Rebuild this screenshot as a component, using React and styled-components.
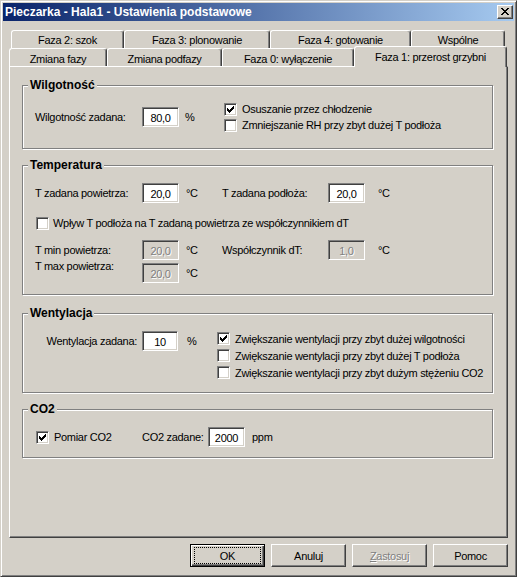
import React from 'react';
import styled, { createGlobalStyle } from 'styled-components';

const GlobalStyle = createGlobalStyle`
  html, body {
    margin: 0;
    padding: 0;
    background: #d4d0c8;
  }
  body {
    font-family: "Liberation Sans", Arial, sans-serif;
    font-size: 11px;
    letter-spacing: -0.3px;
    color: #000;
  }
  * { box-sizing: border-box; }
`;

const Window = styled.div`
  width: 517px;
  height: 577px;
  display: flex;
  flex-direction: column;
  background: #d4d0c8;
  border: 1px solid;
  border-color: #d4d0c8 #404040 #404040 #d4d0c8;
  box-shadow: inset 1px 1px 0 #fff, inset -1px -1px 0 #808080;
  padding: 2px;
`;

const TitleBar = styled.div`
  height: 18px;
  display: flex;
  align-items: center;
  justify-content: space-between;
  padding: 0 1px 0 2px;
  background: linear-gradient(to right, #0a246a, #a6caf0);
`;

const Title = styled.span`
  color: #fff;
  font-weight: bold;
  font-size: 12px;
  letter-spacing: 0;
  white-space: nowrap;
`;

const CloseButton = styled.div`
  width: 16px;
  height: 14px;
  display: flex;
  align-items: center;
  justify-content: center;
  background: #d4d0c8;
  border: 1px solid;
  border-color: #fff #404040 #404040 #fff;
  box-shadow: inset -1px -1px 0 #808080;
  padding: 0 1px 1px 0;
`;

const Body = styled.div`
  flex: 1;
  display: flex;
  flex-direction: column;
  padding: 9px 6px 7px 6px;
`;

const TabStrip = styled.div`
  height: 36px;
  display: flex;
  flex-direction: column;
`;

const TabRow = styled.div`
  height: 18px;
  display: flex;
  padding-left: ${(p) => p.$indent || 0}px;
`;

const Tab = styled.div`
  width: ${(p) => p.$w}px;
  height: ${(p) => (p.$active ? 21 : 18)}px;
  margin-top: ${(p) => (p.$active ? -2 : 0)}px;
  position: ${(p) => (p.$active ? 'relative' : 'static')};
  z-index: ${(p) => (p.$active ? 1 : 'auto')};
  flex-shrink: 0;
  background: #d4d0c8;
  border-top: 1px solid #fff;
  border-left: 1px solid #fff;
  border-right: 1px solid #404040;
  box-shadow: inset -1px 0 0 #808080;
  border-radius: 3px 3px 0 0;
  text-align: center;
  padding-top: ${(p) => (p.$back ? 3 : 4)}px;
  line-height: 13px;
  white-space: nowrap;
`;

const Panel = styled.div`
  flex: 1;
  display: flex;
  flex-direction: column;
  border: 1px solid;
  border-color: #fff #404040 #404040 #fff;
  box-shadow: inset -1px -1px 0 #808080;
  padding: 12px 14px 0 12px;
`;

const Group = styled.fieldset`
  margin: ${(p) => p.$mt || 0}px 0 0 0;
  padding: 0;
  min-width: 0;
  height: ${(p) => p.$h}px;
  border: 1px solid #808080;
  box-shadow: inset 1px 1px 0 #fff, 1px 1px 0 #fff;
`;

const Legend = styled.legend`
  margin-left: 5px;
  padding: 0 2px;
  font-weight: bold;
  font-size: 12px;
  letter-spacing: 0;
  line-height: 13px;
  background: #d4d0c8;
`;

const GroupBody = styled.div`
  padding: ${(p) => p.$pt}px 0 0 12px;
`;

const Row = styled.div`
  display: flex;
  align-items: ${(p) => p.$align || 'center'};
  margin-top: ${(p) => p.$mt || 0}px;
  height: ${(p) => (p.$h ? `${p.$h}px` : 'auto')};
`;

const Label = styled.span`
  width: ${(p) => p.$w}px;
  flex-shrink: 0;
  text-align: ${(p) => (p.$right ? 'right' : 'left')};
  padding-right: ${(p) => (p.$right ? 5 : 0)}px;
  align-self: ${(p) => (p.$raised ? 'flex-start' : 'auto')};
  margin-top: ${(p) => (p.$raised ? -3 : 0)}px;
  line-height: 13px;
  white-space: nowrap;
`;

const Unit = styled.span`
  width: ${(p) => (p.$w ? `${p.$w}px` : 'auto')};
  flex-shrink: 0;
  padding-left: ${(p) => p.$pl || 0}px;
  line-height: 13px;
  white-space: nowrap;
`;

const Field = styled.div`
  width: ${(p) => p.$w || 37}px;
  height: 20px;
  flex-shrink: 0;
  display: flex;
  align-items: center;
  justify-content: center;
  background: ${(p) => (p.$disabled ? '#d4d0c8' : '#fff')};
  color: ${(p) => (p.$disabled ? '#808080' : '#000')};
  text-shadow: ${(p) => (p.$disabled ? '1px 1px 0 #fff' : 'none')};
  border: 1px solid;
  border-color: #808080 #fff #fff #808080;
  box-shadow: inset 1px 1px 0 #404040, inset -1px -1px 0 #d4d0c8;
  padding-top: 1px;
`;

const CheckColumn = styled.div`
  display: flex;
  flex-direction: column;
`;

const CheckRow = styled.label`
  display: flex;
  align-items: center;
  height: ${(p) => p.$h || 16}px;
  gap: ${(p) => p.$gap || 5}px;
  margin-left: ${(p) => p.$ml || 0}px;
  width: ${(p) => (p.$w ? `${p.$w}px` : 'auto')};
  flex-shrink: 0;
  white-space: nowrap;
`;

const Box = styled.span`
  width: 13px;
  height: 13px;
  flex-shrink: 0;
  display: flex;
  align-items: center;
  justify-content: center;
  background: #fff;
  border: 1px solid;
  border-color: #808080 #fff #fff #808080;
  box-shadow: inset 1px 1px 0 #404040, inset -1px -1px 0 #d4d0c8;
`;

const ButtonBar = styled.div`
  display: flex;
  justify-content: flex-end;
  gap: 6px;
  margin-top: 6px;
`;

const Button = styled.div`
  width: 75px;
  height: 23px;
  display: flex;
  padding: 2px 3px;
  background: #d4d0c8;
  border: 1px solid;
  border-color: ${(p) => (p.$default ? '#000' : '#fff #404040 #404040 #fff')};
  box-shadow: ${(p) =>
    p.$default
      ? 'inset 1px 1px 0 #fff, inset -1px -1px 0 #404040, inset -2px -2px 0 #808080'
      : 'inset -1px -1px 0 #808080'};
  color: ${(p) => (p.$disabled ? '#808080' : '#000')};
  text-shadow: ${(p) => (p.$disabled ? '1px 1px 0 #fff' : 'none')};
`;

const ButtonFace = styled.span`
  flex: 1;
  display: flex;
  align-items: center;
  justify-content: center;
  border: 1px dotted ${(p) => (p.$focus ? '#000' : 'transparent')};
`;

const CloseGlyph = () => (
  <svg width="8" height="7" viewBox="0 0 8 7" shapeRendering="crispEdges">
    <path
      d="M0 0h2v1H0zM6 0h2v1H6zM1 1h2v1H1zM5 1h2v1H5zM2 2h4v1H2zM3 3h2v1H3zM2 4h4v1H2zM1 5h2v1H1zM5 5h2v1H5zM0 6h2v1H0zM6 6h2v1H6z"
      fill="#000"
    />
  </svg>
);

const CheckMark = () => (
  <svg width="7" height="7" viewBox="0 0 7 7" shapeRendering="crispEdges">
    <path
      d="M0 2h1v3H0zM1 3h1v3H1zM2 4h1v3H2zM3 3h1v3H3zM4 2h1v3H4zM5 1h1v3H5zM6 0h1v3H6z"
      fill="#000"
    />
  </svg>
);

const Check = ({ checked, children, ...rest }) => (
  <CheckRow {...rest}>
    <Box>{checked && <CheckMark />}</Box>
    <span>{children}</span>
  </CheckRow>
);

const backTabs = [
  { label: 'Faza 2: szok', w: 113 },
  { label: 'Faza 3: plonowanie', w: 146 },
  { label: 'Faza 4: gotowanie', w: 141 },
  { label: 'Wspólne', w: 94 },
];

const frontTabs = [
  { label: 'Zmiana fazy', w: 98 },
  { label: 'Zmiana podfazy', w: 115 },
  { label: 'Faza 0: wyłączenie', w: 132 },
  { label: 'Faza 1: przerost grzybni', w: 153, active: true },
];

export default function App() {
  return (
    <>
      <GlobalStyle />
      <Window>
        <TitleBar>
          <Title>Pieczarka - Hala1 - Ustawienia podstawowe</Title>
          <CloseButton>
            <CloseGlyph />
          </CloseButton>
        </TitleBar>

        <Body>
          <TabStrip>
            <TabRow $indent={2}>
              {backTabs.map((t) => (
                <Tab key={t.label} $w={t.w} $back>{t.label}</Tab>
              ))}
            </TabRow>
            <TabRow>
              {frontTabs.map((t) => (
                <Tab key={t.label} $w={t.w} $active={t.active}>{t.label}</Tab>
              ))}
            </TabRow>
          </TabStrip>

          <Panel>
            <Group $h={70}>
              <Legend>Wilgotność</Legend>
              <GroupBody $pt={9}>
                <Row>
                  <Label $w={107}>Wilgotność zadana:</Label>
                  <Field>80,0</Field>
                  <Unit $w={45} $pl={6}>%</Unit>
                  <CheckColumn>
                    <Check checked>Osuszanie przez chłodzenie</Check>
                    <Check>Zmniejszanie RH przy zbyt dużej T podłoża</Check>
                  </CheckColumn>
                </Row>
              </GroupBody>
            </Group>

            <Group $h={136} $mt={10}>
              <Legend>Temperatura</Legend>
              <GroupBody $pt={11}>
                <Row $h={20}>
                  <Label $w={107}>T zadana powietrza:</Label>
                  <Field>20,0</Field>
                  <Unit $w={43} $pl={7}>°C</Unit>
                  <Label $w={106}>T zadana podłoża:</Label>
                  <Field>20,0</Field>
                  <Unit $pl={13}>°C</Unit>
                </Row>
                <Row $h={20} $mt={10}>
                  <Check $ml={1} $gap={4}>
                    Wpływ T podłoża na T zadaną powietrza ze współczynnikiem dT
                  </Check>
                </Row>
                <Row $h={20} $mt={7}>
                  <Label $w={107}>T min powietrza:</Label>
                  <Field $disabled>20,0</Field>
                  <Unit $w={43} $pl={7}>°C</Unit>
                  <Label $w={106}>Współczynnik dT:</Label>
                  <Field $disabled>1,0</Field>
                  <Unit $pl={13}>°C</Unit>
                </Row>
                <Row $h={20} $mt={3}>
                  <Label $w={107} $raised>T max powietrza:</Label>
                  <Field $disabled>20,0</Field>
                  <Unit $w={43} $pl={7}>°C</Unit>
                </Row>
              </GroupBody>
            </Group>

            <Group $h={86} $mt={12}>
              <Legend>Wentylacja</Legend>
              <GroupBody $pt={10}>
                <Row $align="flex-start">
                  <Row $h={20} $mt={1}>
                    <Label $w={107} $right>Wentylacja zadana:</Label>
                    <Field $w={36}>10</Field>
                    <Unit $w={39} $pl={9}>%</Unit>
                  </Row>
                  <CheckColumn>
                    <Check checked $h={17}>Zwiększanie wentylacji przy zbyt dużej wilgotności</Check>
                    <Check $h={17}>Zwiększanie wentylacji przy zbyt dużej T podłoża</Check>
                    <Check $h={17}>Zwiększanie wentylacji przy zbyt dużym stężeniu CO2</Check>
                  </CheckColumn>
                </Row>
              </GroupBody>
            </Group>

            <Group $h={55} $mt={10}>
              <Legend>CO2</Legend>
              <GroupBody $pt={11}>
                <Row $h={20}>
                  <Check checked $ml={1} $w={106}>Pomiar CO2</Check>
                  <Label $w={66} $right>CO2 zadane:</Label>
                  <Field>2000</Field>
                  <Unit $pl={7}>ppm</Unit>
                </Row>
              </GroupBody>
            </Group>
          </Panel>

          <ButtonBar>
            <Button $default>
              <ButtonFace $focus>OK</ButtonFace>
            </Button>
            <Button>
              <ButtonFace>Anuluj</ButtonFace>
            </Button>
            <Button $disabled>
              <ButtonFace>
                <u>Z</u>astosuj
              </ButtonFace>
            </Button>
            <Button>
              <ButtonFace>Pomoc</ButtonFace>
            </Button>
          </ButtonBar>
        </Body>
      </Window>
    </>
  );
}
